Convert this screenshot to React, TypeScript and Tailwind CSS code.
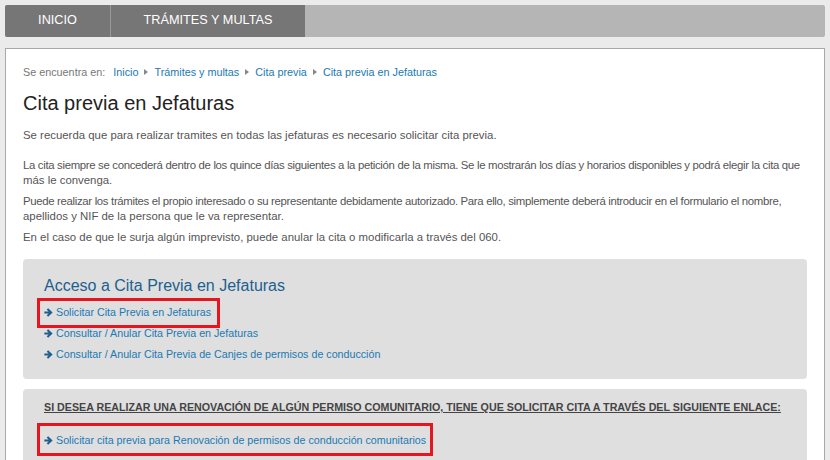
import React from "react";

const Arrow = () => (
  <svg width="9" height="9" viewBox="0 0 10 10" className="inline-block mr-[3px] -mt-[2px]" fill="#1d5f8f">
    <path d="M4.6 0.4 L9.6 5 L4.6 9.6 L3 8 L5.2 6.1 H0.4 V3.9 H5.2 L3 2 Z" />
  </svg>
);

const Sep = () => (
  <svg width="4" height="6" viewBox="0 0 4 6" className="inline-block mx-[6px] mb-[1px]" fill="#888">
    <path d="M0 0 L4 3 L0 6 Z" />
  </svg>
);

const Highlight = ({ children, pad }: { children: React.ReactNode; pad: string }) => (
  <span className="relative inline-block">
    {children}
    <span className={`absolute border-[3px] border-[#e5161f] ${pad}`} />
  </span>
);

export default function App() {
  const link = "text-[#1b79b3]";
  return (
    <div className="h-[460px] overflow-hidden bg-[#ebebeb] px-[5px] pt-[5px] font-['Liberation_Sans',Arial,sans-serif]">
      <nav className="flex h-[32px] rounded-[2px] bg-[#b5b5b5] text-[12.7px] text-white">
        <div className="flex w-[106px] items-center justify-center rounded-l-[2px] border-r border-[#999] bg-[#767676]">INICIO</div>
        <div className="flex w-[194px] items-center justify-center bg-[#767676]">TRÁMITES Y MULTAS</div>
      </nav>

      <main className="mt-[11px] h-[420px] border border-[#a8a8a8] bg-white px-[17px] pt-[15px]">
        <div className="flex items-center text-[10.8px] leading-[16px] text-[#777]">
          <span className="mr-[8px]">Se encuentra en:</span>
          <span className={link}>Inicio</span>
          <Sep />
          <span className={link}>Trámites y multas</span>
          <Sep />
          <span className={link}>Cita previa</span>
          <Sep />
          <span className={link}>Cita previa en Jefaturas</span>
        </div>

        <h1 className="mt-[9px] text-[20px] leading-[28px] text-[#222]">Cita previa en Jefaturas</h1>

        <div className="mt-[11px] text-[11.4px] leading-[15.5px] text-[#555]">
          <p>Se recuerda que para realizar tramites en todas las jefaturas es necesario solicitar cita previa.</p>
          <p className="mt-[14px] whitespace-nowrap">
            <span className="block tracking-[-0.33px]">
              La cita siempre se concederá dentro de los quince días siguientes a la petición de la misma. Se le mostrarán los días y horarios disponibles y podrá elegir la cita que
            </span>
            <span className="block">más le convenga.</span>
          </p>
          <p className="mt-[5px] whitespace-nowrap">
            <span className="block tracking-[-0.33px]">
              Puede realizar los trámites el propio interesado o su representante debidamente autorizado. Para ello, simplemente deberá introducir en el formulario el nombre,
            </span>
            <span className="block">apellidos y NIF de la persona que le va representar.</span>
          </p>
          <p className="mt-[5px]">En el caso de que le surja algún imprevisto, puede anular la cita o modificarla a través del 060.</p>
        </div>

        <section className="mt-[14px] rounded-[4px] bg-[#dfdfdf] px-[21px] pt-[16px] pb-[14px]">
          <h2 className="text-[16px] leading-[22px] text-[#1d5f8f]">Acceso a Cita Previa en Jefaturas</h2>
          <ul className="mt-[5px] text-[10.7px] leading-[21px]">
            <li className={link}>
              <Highlight pad="-left-[7px] -right-[9px] -top-[4px] -bottom-[5px]">
                <Arrow />Solicitar Cita Previa en Jefaturas
              </Highlight>
            </li>
            <li className={link}><Arrow />Consultar / Anular Cita Previa en Jefaturas</li>
            <li className={link}><Arrow />Consultar / Anular Cita Previa de Canjes de permisos de conducción</li>
          </ul>
        </section>

        <section className="mt-[10px] rounded-[4px] bg-[#dfdfdf] px-[21px] pt-[10px] pb-[16px]">
          <h3 className="whitespace-nowrap text-[10.7px] font-bold leading-[16px] text-[#444] underline">
            SI DESEA REALIZAR UNA RENOVACIÓN DE ALGÚN PERMISO COMUNITARIO, TIENE QUE SOLICITAR CITA A TRAVÉS DEL SIGUIENTE ENLACE:
          </h3>
          <div className={`mt-[17px] text-[10.7px] leading-[16px] ${link}`}>
            <Highlight pad="-left-[7px] -right-[7px] -top-[9px] -bottom-[8px]">
              <Arrow />Solicitar cita previa para Renovación de permisos de conducción comunitarios
            </Highlight>
          </div>
        </section>
      </main>
    </div>
  );
}
